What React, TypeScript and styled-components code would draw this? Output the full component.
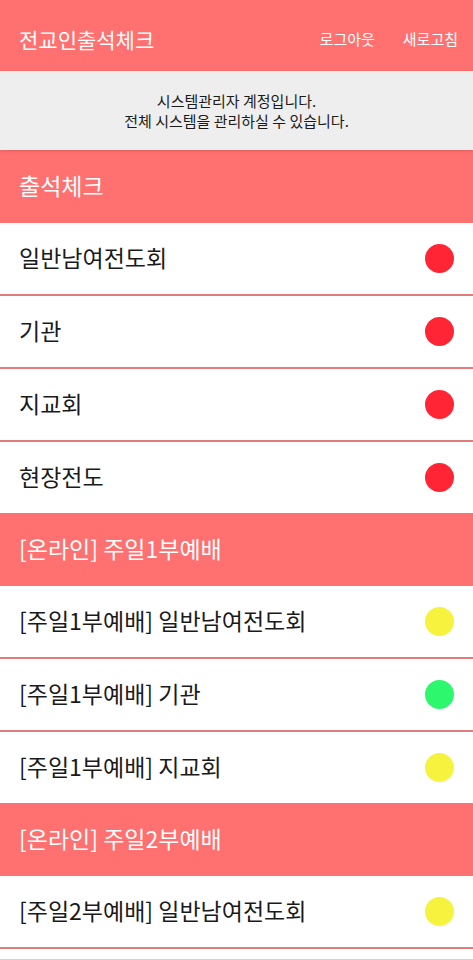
import React from 'react';
import styled, { createGlobalStyle } from 'styled-components';

const GlobalStyle = createGlobalStyle`
  *, *::before, *::after { box-sizing: border-box; }
  body {
    margin: 0;
    background: #fff;
    color: #1a1a1a;
    font-family: "Noto Sans CJK KR", "Noto Sans", sans-serif;
  }
`;

const Page = styled.div`
  display: flex;
  flex-direction: column;
  min-height: 100vh;
  border-bottom: 1px solid #d2d2d2;
`;

const TopBar = styled.header`
  display: flex;
  align-items: center;
  justify-content: space-between;
  padding: 24px 15px 17px 19px;
  background: #ff7070;
  color: #fff;
`;

const AppTitle = styled.h1`
  margin: 0;
  font-size: 21px;
  line-height: 30px;
  font-weight: 400;
`;

const Actions = styled.nav`
  display: flex;
  gap: 28px;
`;

const ActionButton = styled.button`
  padding: 0;
  border: 0;
  background: none;
  color: inherit;
  font: inherit;
  font-size: 15px;
  line-height: 30px;
  cursor: pointer;
`;

const Notice = styled.p`
  position: relative;
  margin: 0;
  padding: 20px 16px 19px;
  background: #eee;
  box-shadow: 0 1px 3px rgba(0, 0, 0, 0.15);
  font-size: 15px;
  line-height: 20px;
  text-align: center;
`;

const NoticeLine = styled.span`
  display: block;
`;

const SectionTitle = styled.h2`
  margin: 0;
  padding: 20px 19px 23px;
  background: #ff7070;
  color: #fff;
  font-size: 23px;
  line-height: 30px;
  font-weight: 400;
`;

const List = styled.ul`
  margin: 0;
  padding: 0;
  list-style: none;
`;

const Row = styled.li<{ $divided: boolean }>`
  display: flex;
  align-items: center;
  justify-content: space-between;
  padding: 19px;
  border-bottom: ${({ $divided }) => ($divided ? '2px solid #e27c7c' : '0')};
`;

const RowName = styled.span`
  padding-bottom: 3px;
  font-size: 23px;
  line-height: 30px;
`;

const colors = { red: '#ff2535', yellow: '#f6f33f', green: '#2df76c' };

const Dot = styled.span<{ $tone: keyof typeof colors }>`
  flex: none;
  width: 29px;
  height: 29px;
  border-radius: 50%;
  background: ${({ $tone }) => colors[$tone]};
`;

type Item = { name: string; tone: keyof typeof colors };

const sections: { title: string; items: Item[]; open?: boolean }[] = [
  {
    title: '출석체크',
    items: [
      { name: '일반남여전도회', tone: 'red' },
      { name: '기관', tone: 'red' },
      { name: '지교회', tone: 'red' },
      { name: '현장전도', tone: 'red' },
    ],
  },
  {
    title: '[온라인] 주일1부예배',
    items: [
      { name: '[주일1부예배] 일반남여전도회', tone: 'yellow' },
      { name: '[주일1부예배] 기관', tone: 'green' },
      { name: '[주일1부예배] 지교회', tone: 'yellow' },
    ],
  },
  {
    title: '[온라인] 주일2부예배',
    items: [{ name: '[주일2부예배] 일반남여전도회', tone: 'yellow' }],
    open: true,
  },
];

export default function App() {
  return (
    <Page>
      <GlobalStyle />
      <TopBar>
        <AppTitle>전교인출석체크</AppTitle>
        <Actions>
          <ActionButton type="button">로그아웃</ActionButton>
          <ActionButton type="button">새로고침</ActionButton>
        </Actions>
      </TopBar>
      <Notice>
        <NoticeLine>시스템관리자 계정입니다.</NoticeLine>
        <NoticeLine>전체 시스템을 관리하실 수 있습니다.</NoticeLine>
      </Notice>
      <main>
        {sections.map((section) => (
          <section key={section.title}>
            <SectionTitle>{section.title}</SectionTitle>
            <List>
              {section.items.map((item, index) => (
                <Row
                  key={item.name}
                  $divided={section.open || index < section.items.length - 1}
                >
                  <RowName>{item.name}</RowName>
                  <Dot $tone={item.tone} role="img" aria-label={item.tone} />
                </Row>
              ))}
            </List>
          </section>
        ))}
      </main>
    </Page>
  );
}
